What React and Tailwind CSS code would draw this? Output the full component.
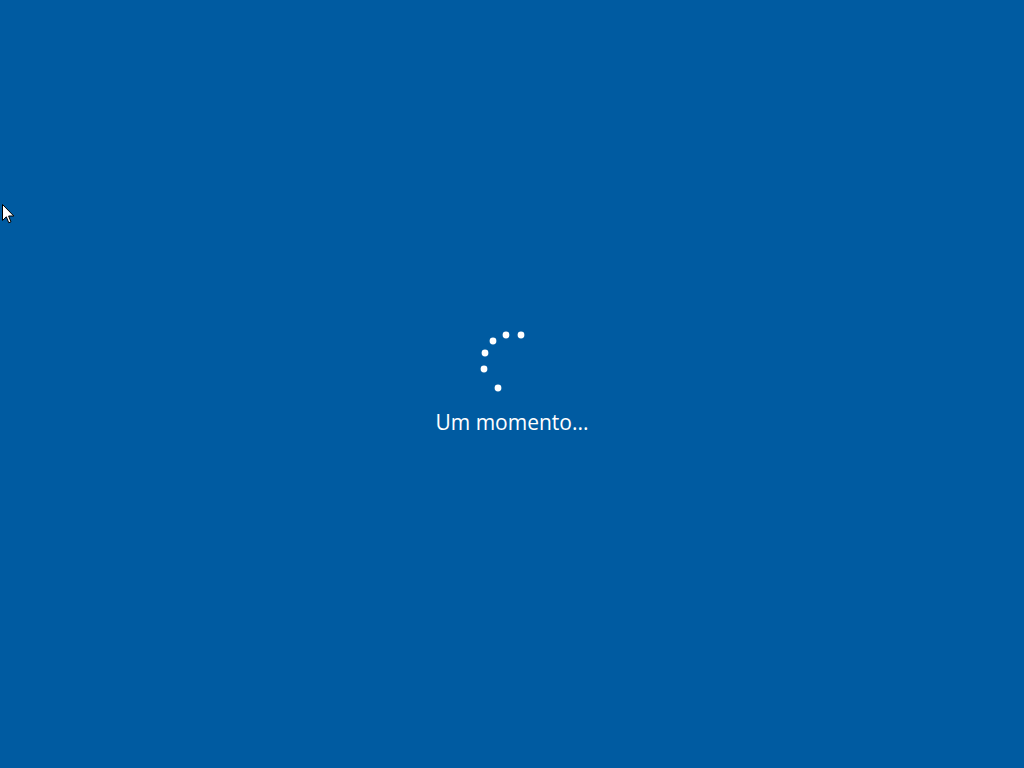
export default function App() {
  const dots = [
    [506, 335],
    [521, 335],
    [493, 341],
    [485, 353],
    [484, 369],
    [498, 388],
  ];

  return (
    <div className="relative flex h-[768px] w-full flex-col items-center overflow-hidden bg-[#005ba1] pt-[329px]">
      {/* spinner */}
      <svg width="64" height="64" viewBox="480 329 64 64" className="block">
        {dots.map(([x, y], i) => (
          <circle key={i} cx={x} cy={y} r="3.4" fill="#ffffff" />
        ))}
      </svg>

      <div
        className="mt-[15px] text-[21px] leading-[28px] text-white"
        style={{ fontFamily: '"Open Sans", "Noto Sans", sans-serif' }}
      >
        Um momento...
      </div>

      {/* mouse pointer */}
      <svg
        width="13"
        height="21"
        viewBox="0 0 13 21"
        className="absolute left-[2px] top-[204px]"
      >
        <path
          d="M0.5 0.5 L0.5 16.5 L4.3 12.8 L6.8 18.8 L9 17.9 L6.6 12 L11.8 12 Z"
          fill="#ffffff"
          stroke="#000000"
          strokeWidth="1"
          strokeLinejoin="miter"
        />
      </svg>
    </div>
  );
}
